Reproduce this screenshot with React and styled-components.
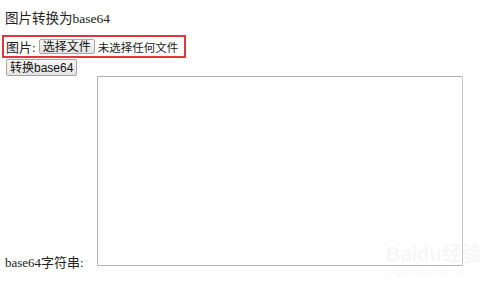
import React from 'react'
import styled, { createGlobalStyle } from 'styled-components'

const GlobalStyle = createGlobalStyle`
  html, body {
    margin: 0;
    padding: 0;
    background: #fff;
  }
  body {
    font-family: "Liberation Serif", "Noto Sans CJK SC", serif;
    font-size: 13px;
    color: #222;
  }
`

const Page = styled.div`
  position: relative;
  width: 500px;
  height: 291px;
  padding: 10px 0 0 5px;
  box-sizing: border-box;
  overflow: hidden;
  white-space: nowrap;
`

const Title = styled.div`
  line-height: 18px;
  height: 18px;
  font-size: 13.5px;
`

const FileRow = styled.div`
  display: flex;
  align-items: center;
  margin: 7px 0 0 -3px;
  width: 184px;
  height: 23px;
  box-sizing: border-box;
  border: 2px solid #e2363e;
  padding-left: 2px;
  & > * {
    flex-shrink: 0;
  }
`

const Label = styled.span`
  font-size: 13px;
  margin-right: 3px;
`

const Button = styled.button`
  font-family: "Liberation Sans", "Noto Sans CJK SC", sans-serif;
  font-size: 12px;
  line-height: 12px;
  height: ${({ $h }) => $h}px;
  padding: 0 ${({ $px }) => $px}px;
  margin: 0;
  color: #111;
  white-space: nowrap;
  background: linear-gradient(#f7f7f7, #e3e3e3);
  border: 1px solid #a6a6a6;
  border-radius: 2px;
`

const FileStatus = styled.span`
  font-family: "Liberation Sans", "Noto Sans CJK SC", sans-serif;
  font-size: 11.5px;
  margin-left: 3px;
`

const ConvertRow = styled.div`
  margin: 1px 0 0 1px;
  height: 17px;
`

const OutputRow = styled.div`
  display: flex;
  align-items: flex-end;
`

const OutputLabel = styled.span`
  font-size: 13px;
  line-height: 15px;
  width: 92px;
  flex-shrink: 0;
  margin-bottom: -4px;
`

const Output = styled.textarea`
  width: 366px;
  height: 190px;
  flex-shrink: 0;
  box-sizing: border-box;
  border: 1px solid #b4b4b4;
  border-right-color: #c8c8c8;
  resize: none;
  margin: 0;
  padding: 2px;
  outline: none;
`

const Watermark = styled.div`
  position: absolute;
  left: 386px;
  top: 244px;
  font-family: "Liberation Sans", "Noto Sans CJK SC", sans-serif;
  color: rgba(200, 200, 200, 0.16);
  pointer-events: none;
  line-height: 1;
`

const MarkBig = styled.div`
  font-size: 20px;
  font-weight: bold;
`

const MarkSmall = styled.div`
  font-size: 9px;
  margin-top: 4px;
  letter-spacing: 0.5px;
`

export default function App() {
  return (
    <>
      <GlobalStyle />
      <Page>
        <Title>图片转换为base64</Title>
        <FileRow>
          <Label>图片:</Label>
          <Button $h={15} $px={3}>选择文件</Button>
          <FileStatus>未选择任何文件</FileStatus>
        </FileRow>
        <ConvertRow>
          <Button $h={17} $px={3}>转换base64</Button>
        </ConvertRow>
        <OutputRow>
          <OutputLabel>base64字符串:</OutputLabel>
          <Output />
        </OutputRow>
        <Watermark>
          <MarkBig>Baidu经验</MarkBig>
          <MarkSmall>jingyan.baidu.com</MarkSmall>
        </Watermark>
      </Page>
    </>
  )
}
